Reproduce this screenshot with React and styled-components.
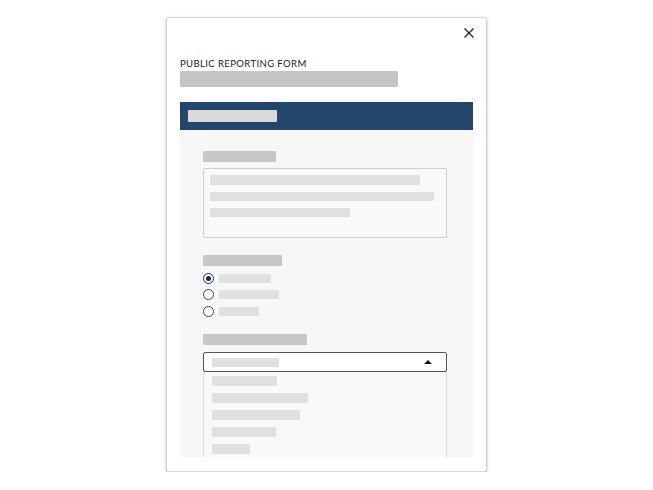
import React from 'react'
import styled, { createGlobalStyle } from 'styled-components'

const Global = createGlobalStyle`
body{
  margin: 0;
  background: #ffffff;
  font-family: Lato, "Liberation Sans", sans-serif;
}
`

const options = [52, 60, 40]
const listItems = [65, 96, 88, 64, 38]

export default function App() {
  return (
    <>
      <Global />
      <Page>
        <Card>
          <CloseRow>
            <Close aria-label="close">
              <svg width="10" height="10" viewBox="0 0 10 10">
                <path d="M0.5 0.5 L9.5 9.5 M9.5 0.5 L0.5 9.5" stroke="#222" strokeWidth="1.3" />
              </svg>
            </Close>
          </CloseRow>
          <Title>PUBLIC REPORTING FORM</Title>
          <Bar w={218} h={16} c="#c4c4c4" />

          <Header>
            <Bar w={89} h={12} c="#d9d9d9" />
          </Header>

          <Panel>
            <Bar w={73} h={11} c="#c7c7c7" />
            <TextArea>
              <Bar w={210} h={10} c="#e0e0e0" />
              <Bar w={224} h={9} c="#e0e0e0" />
              <Bar w={140} h={9} c="#e0e0e0" />
            </TextArea>

            <Section>
              <Bar w={79} h={11} c="#c7c7c7" />
              <Radios>
                {options.map((w, i) => (
                  <RadioRow key={i}>
                    <Radio checked={i === 0} />
                    <Bar w={w} h={9} c="#e0e0e0" />
                  </RadioRow>
                ))}
              </Radios>
            </Section>

            <Section top={15}>
              <Bar w={104} h={11} c="#c7c7c7" />
              <Select>
                <Bar w={67} h={9} c="#e0e0e0" />
                <Caret />
              </Select>
              <List>
                {listItems.map((w, i) => (
                  <Bar key={i} w={w} h={10} c="#e0e0e0" />
                ))}
              </List>
            </Section>
          </Panel>
        </Card>
      </Page>
    </>
  )
}

const Page = styled.div`
display: flex;
justify-content: center;
padding-top: 17px;
`

const Card = styled.div`
width: 321px;
height: 455px;
box-sizing: border-box;
background: #fff;
border: 1px solid #d8d8d8;
border-radius: 3px;
box-shadow: 0 1.5px 3px rgba(0, 0, 0, 0.28);
padding: 0 13px 0 13px;
display: flex;
flex-direction: column;
`

const CloseRow = styled.div`
display: flex;
justify-content: flex-end;
padding-top: 10px;
height: 10px;
margin-right: -1px;
`

const Close = styled.div`
width: 10px;
height: 10px;
display: flex;
cursor: pointer;
`

const Title = styled.div`
margin-top: 20px;
margin-bottom: 1px;
font-size: 9.5px;
line-height: 12px;
letter-spacing: 0.4px;
color: #1a1a1a;
`

const Bar = styled.div`
width: ${p => p.w}px;
height: ${p => p.h}px;
background: ${p => p.c};
border-radius: 1px;
flex-shrink: 0;
`

const Header = styled.div`
margin-top: 15px;
height: 28px;
flex-shrink: 0;
background: #25466b;
display: flex;
align-items: center;
padding-left: 8px;
`

const Panel = styled.div`
height: 327px;
flex-shrink: 0;
overflow: hidden;
background: #f7f7f7;
padding: 21px 26px 0 23px;
box-sizing: border-box;
display: flex;
flex-direction: column;
`

const TextArea = styled.div`
margin-top: 6px;
height: 70px;
flex-shrink: 0;
box-sizing: border-box;
border: 1px solid #d0d0d0;
border-radius: 2px;
background: #f9f9f9;
padding: 6px 0 0 6px;
display: flex;
flex-direction: column;
gap: 7px;
`

const Section = styled.div`
margin-top: ${p => p.top || 17}px;
flex-shrink: 0;
display: flex;
flex-direction: column;
`

const Radios = styled.div`
margin-top: 4px;
display: flex;
flex-direction: column;
gap: 0.5px;
`

const RadioRow = styled.div`
height: 16px;
display: flex;
align-items: center;
gap: 5px;
`

const Radio = styled.div`
width: 11px;
height: 11px;
box-sizing: border-box;
border-radius: 50%;
border: 1px solid ${p => (p.checked ? '#1c2d45' : '#444')};
background: #fff;
display: flex;
align-items: center;
justify-content: center;
&::after{
  content: '';
  display: ${p => (p.checked ? 'block' : 'none')};
  width: 5px;
  height: 5px;
  border-radius: 50%;
  background: #16263d;
}
`

const Select = styled.div`
margin-top: 7px;
height: 20px;
flex-shrink: 0;
box-sizing: border-box;
border: 1px solid #555;
border-radius: 2px;
background: #fff;
display: flex;
align-items: center;
justify-content: space-between;
padding: 0 14px 0 8px;
`

const Caret = styled.div`
width: 0;
height: 0;
border-left: 4.5px solid transparent;
border-right: 4.5px solid transparent;
border-bottom: 4px solid #111;
`

const List = styled.div`
height: 120px;
flex-shrink: 0;
box-sizing: border-box;
border: 1px solid #dcdcdc;
border-top: none;
background: #f9f9f9;
padding: 4px 0 0 8px;
display: flex;
flex-direction: column;
gap: 7px;
`
